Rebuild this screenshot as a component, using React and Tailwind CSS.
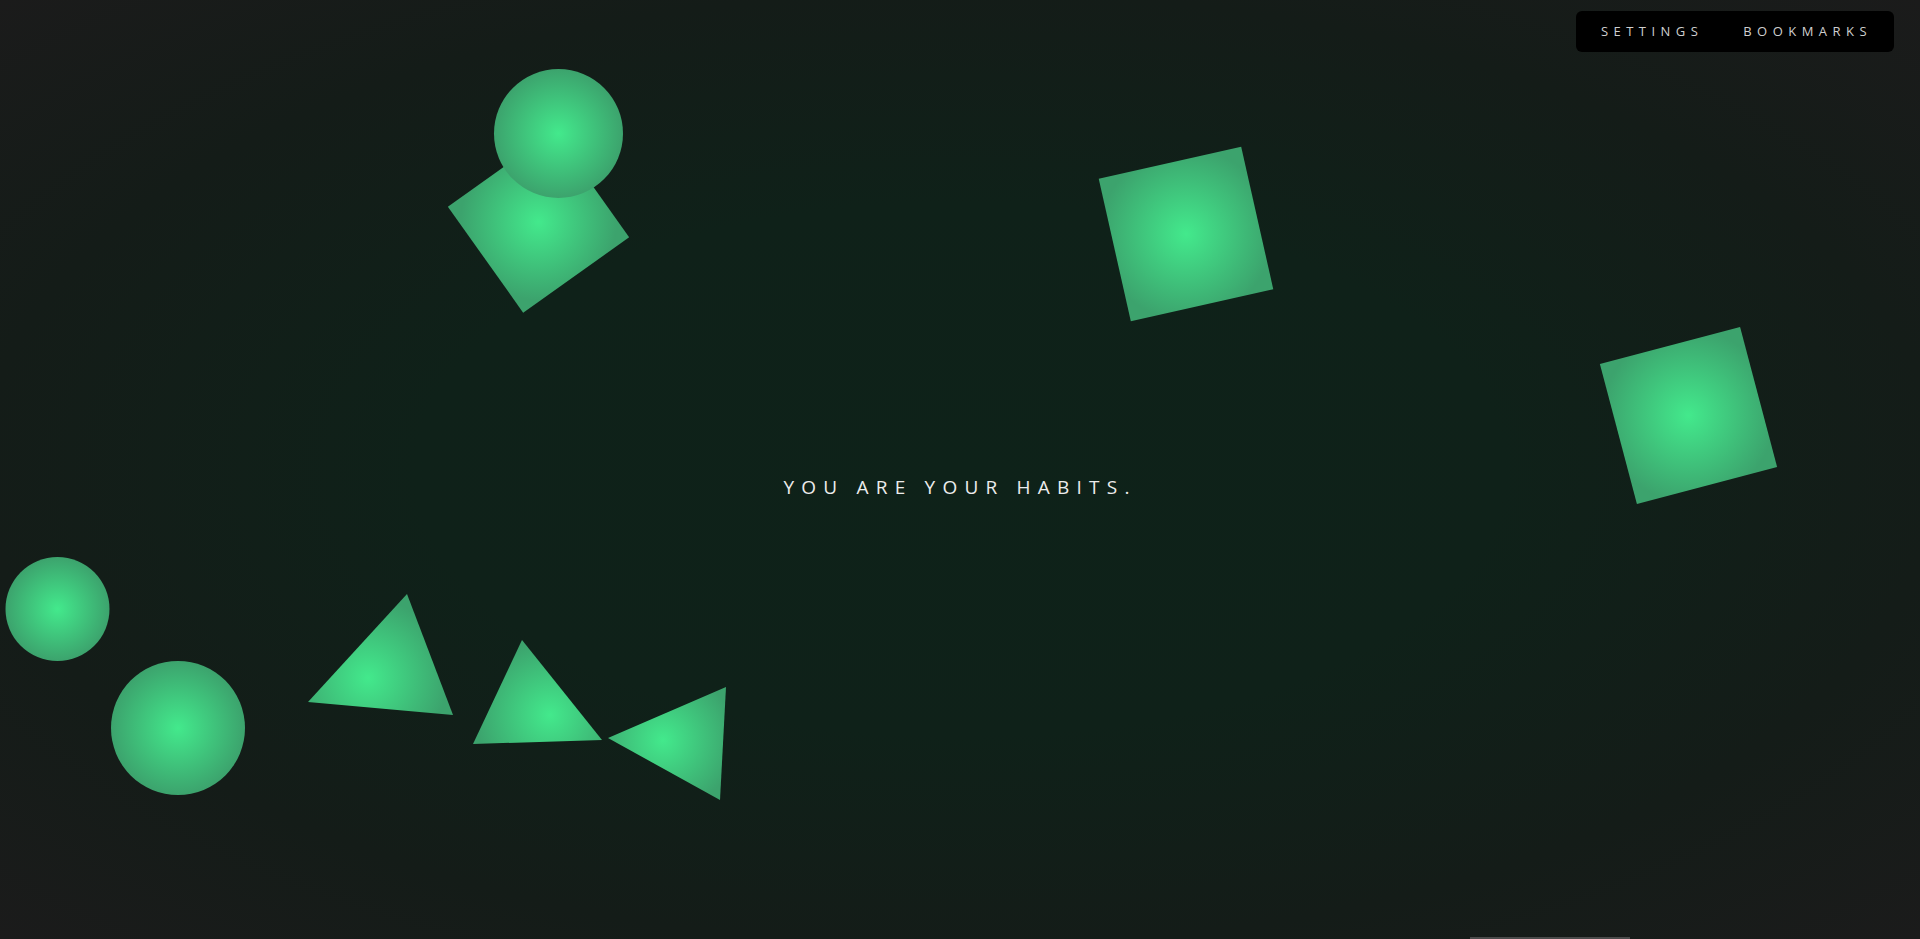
import React from "react";

const C_IN = "#43e98c";
const C_OUT = "#3ca36d";

function Grad({ id, cx, cy, r }) {
  return (
    <radialGradient id={id} gradientUnits="userSpaceOnUse" cx={cx} cy={cy} r={r}>
      <stop offset="0%" stopColor={C_IN} />
      <stop offset="100%" stopColor={C_OUT} />
    </radialGradient>
  );
}

function Shapes() {
  return (
    <svg
      className="absolute inset-0 pointer-events-none"
      width="1920"
      height="939"
      viewBox="0 0 1920 939"
    >
      <defs>
        <Grad id="sq1" cx={0} cy={0} r={78} />
        <Grad id="sq2" cx={0} cy={0} r={86} />
        <Grad id="sq3" cx={0} cy={0} r={86} />
        <Grad id="c1" cx={558.5} cy={133.5} r={64.5} />
        <Grad id="c2" cx={57.5} cy={609} r={52} />
        <Grad id="c3" cx={178} cy={728} r={67} />
        <Grad id="t1" cx={368} cy={678} r={80} />
        <Grad id="t2" cx={550} cy={715} r={75} />
        <Grad id="t3" cx={663} cy={740} r={72} />
      </defs>
      <rect x={-65} y={-65} width={130} height={130} fill="url(#sq1)" transform="translate(538.5 222) rotate(-35.4)" />
      <circle cx={558.5} cy={133.5} r={64.5} fill="url(#c1)" />
      <rect x={-73} y={-73} width={146} height={146} fill="url(#sq2)" transform="translate(1186 234) rotate(-12.7)" />
      <rect x={-72.5} y={-72.5} width={145} height={145} fill="url(#sq3)" transform="translate(1688.5 415.5) rotate(-14.8)" />
      <circle cx={57.5} cy={609} r={52} fill="url(#c2)" />
      <circle cx={178} cy={728} r={67} fill="url(#c3)" />
      <polygon points="407,594 308,702 453,715" fill="url(#t1)" />
      <polygon points="522,640 473,744 602,740" fill="url(#t2)" />
      <polygon points="608,738 726,687 720,800" fill="url(#t3)" />
    </svg>
  );
}

export default function App() {
  return (
    <div
      className="relative w-full h-[939px] overflow-hidden flex flex-col bg-[radial-gradient(ellipse_at_center,#0e2219_0%,#0f2119_40%,#141c18_72%,#1b1b1b_100%)]"
      style={{ fontFamily: '"Open Sans", "Noto Sans", sans-serif' }}
    >
      <Shapes />
      <header className="relative flex justify-end pt-[11px] pr-[26px]">
        <nav className="flex items-center h-[41px] bg-black rounded-[6px] pl-[25px] pr-[22px] gap-[40px]">
          <a className="text-[13px] leading-none tracking-[0.42em] text-[#cfcfcf] uppercase">Settings</a>
          <a className="text-[13px] leading-none tracking-[0.42em] text-[#cfcfcf] uppercase">Bookmarks</a>
        </nav>
      </header>
      <main className="relative flex-1 flex items-center justify-center pb-[17px]">
        <h1 className="text-[19px] leading-[26px] tracking-[0.38em] text-[#ececec] font-normal">
          YOU ARE YOUR HABITS.
        </h1>
      </main>
      <div className="absolute bottom-0 left-[1470px] w-[160px] h-[2px] bg-[#4b4b4b]" />
    </div>
  );
}
